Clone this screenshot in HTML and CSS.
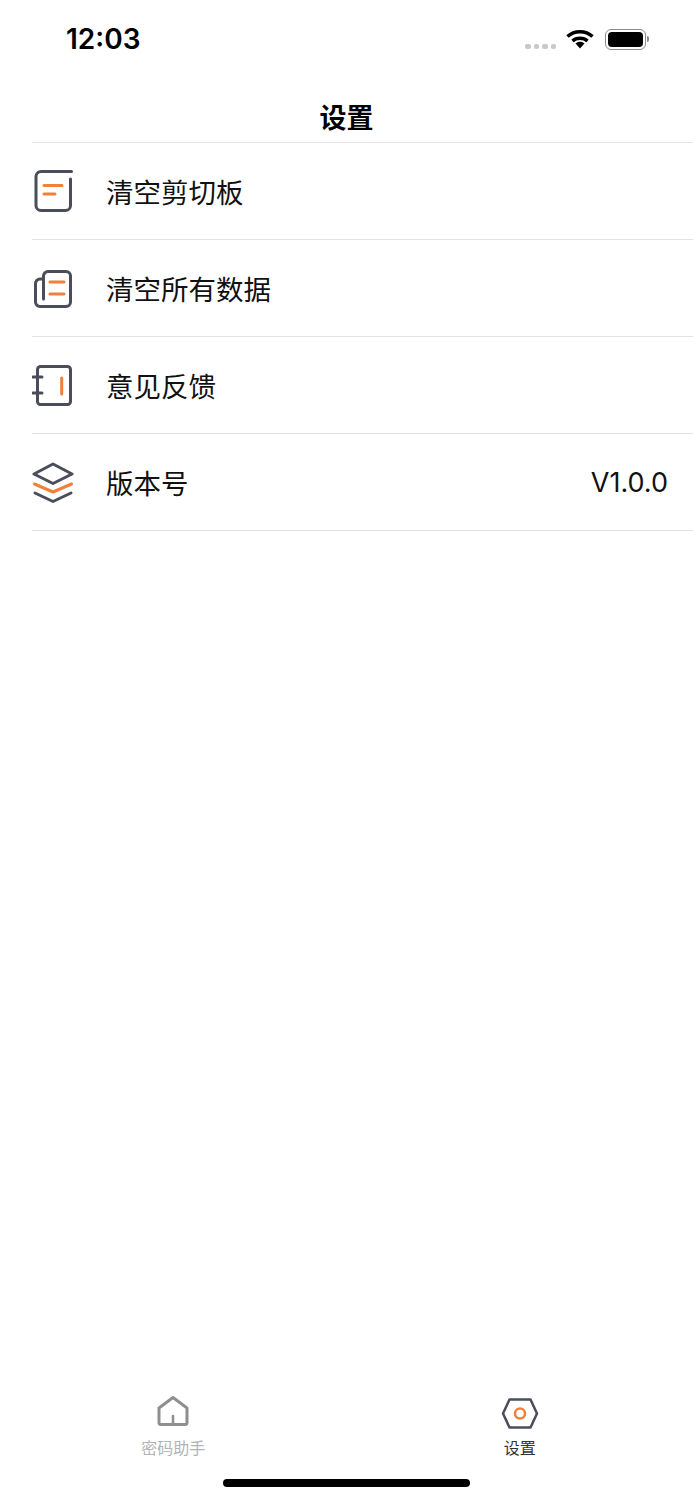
FILE: index.html
```html
<!DOCTYPE html>
<html lang="zh-CN">
<head>
  <meta charset="UTF-8">
  <meta name="viewport" content="width=device-width, initial-scale=1.0">
  <title>设置</title>
  <link rel="stylesheet" href="styles.css">
</head>
<body>
  <div class="page">
    <div class="status-bar">
      <span class="time">12:03</span>
      <div class="status-icons">
        <div class="signal"><i></i><i></i><i></i><i></i></div>
        <svg class="wifi" width="28" height="20" viewBox="0 0 28 20">
          <path d="M1.5 7.5C8.5 1 19.5 1 26.5 7.5" class="wifi-arc"/>
          <path d="M6.5 12C10.5 8.3 17.500 8.300 21.500 12" class="wifi-arc"/>
          <path d="M9.500 14.500L14 19.500L18.500 14.500C16 12.300 12 12.300 9.500 14.500Z"/>
        </svg>
        <div class="battery"><div class="battery-fill"></div></div>
        <div class="battery-tip"></div>
      </div>
    </div>
    <div class="nav-title">设置</div>
    <div class="menu">
      <div class="menu-row">
        <svg class="menu-icon" viewBox="0 0 44 44">
          <path class="dark" d="M39.500 2.500H9a5 5 0 0 0-5 5V36.500a5 5 0 0 0 5 5H33.500a5 5 0 0 0 5-5V10"/>
          <path class="accent" d="M12 16.500H30M12 25H23"/>
        </svg>
        <span class="menu-label">清空剪切板</span>
      </div>
      <div class="menu-row">
        <svg class="menu-icon" viewBox="0 0 44 44">
          <path class="dark" d="M11.500 33V10a4.500 4.500 0 0 1 4.500-4.500H34a4.500 4.500 0 0 1 4.500 4.500V36a4.500 4.500 0 0 1-4.500 4.500H8a4.500 4.500 0 0 1-4.500-4.500V17.500a4.500 4.500 0 0 1 4.500-4.500H11.500"/>
          <path class="accent" d="M18 16H32M18 28H32"/>
        </svg>
        <span class="menu-label">清空所有数据</span>
      </div>
      <div class="menu-row">
        <svg class="menu-icon" viewBox="0 0 44 44">
          <rect class="dark" x="5.500" y="3.500" width="33" height="38" rx="3"/>
          <path class="dark" d="M1 14H10M1 30H10"/>
          <path class="accent" d="M29.700 15V31"/>
        </svg>
        <span class="menu-label">意见反馈</span>
      </div>
      <div class="menu-row">
        <svg class="menu-icon" viewBox="0 0 44 44">
          <path class="dark" d="M21 4L40 14L21 23.500L2 14Z"/>
          <path class="accent" d="M2.500 24L21 32L39.500 24"/>
          <path class="dark" d="M3 33L21 41.500L39 33"/>
        </svg>
        <span class="menu-label">版本号</span>
        <span class="menu-value">V1.0.0</span>
      </div>
    </div>
    <div class="tab-bar">
      <div class="tab tab-off">
        <svg class="tab-icon" viewBox="0 0 44 44">
          <path class="grey" d="M22 5.500L36 16V30.500a2 2 0 0 1-2 2H10a2 2 0 0 1-2-2V16Z"/>
          <path class="grey thin" d="M22 24V31"/>
        </svg>
        <span>密码助手</span>
      </div>
      <div class="tab">
        <svg class="tab-icon" viewBox="0 0 44 44">
          <path class="dark thin" d="M11.500 7.500H32.500L39 21.500L32.500 35.500H11.500L5 21.500Z"/>
          <circle class="accent thin" cx="22" cy="21.500" r="5"/>
        </svg>
        <span>设置</span>
      </div>
    </div>
    <div class="home-bar"><div class="home-pill"></div></div>
  </div>
</body>
</html>
```

FILE: styles.css
```css
body {
  margin: 0;
  background: #fff;
  font-family: "Noto Sans CJK SC", "Noto Sans", sans-serif;
  color: #111;
}
.page {
  width: 693px;
  height: 1500px;
  display: flex;
  flex-direction: column;
  overflow: hidden;
}
.status-bar {
  height: 80px;
  display: flex;
  justify-content: space-between;
  align-items: flex-start;
  padding: 0 44px 0 66px;
  box-sizing: border-box;
}
.time {
  margin-top: 22px;
  font-family: Inter, "Liberation Sans", sans-serif;
  font-size: 28px;
  font-weight: 600;
  line-height: 34px;
  color: #000;
}
.status-icons {
  display: flex;
  align-items: flex-start;
  margin-top: 29px;
}
.signal {
  display: flex;
  gap: 3px;
  margin: 15px 10px 0 0;
}
.signal i {
  width: 5.500px;
  height: 5px;
  border-radius: 2px;
  background: #c9c9c9;
}
.wifi {
  margin-right: 11px;
}
.wifi path {
  fill: #000;
}
.wifi .wifi-arc {
  fill: none;
  stroke: #000;
  stroke-width: 3.500;
}
.battery {
  width: 41px;
  height: 21px;
  box-sizing: border-box;
  border: 1.500px solid #8c8c8c;
  border-radius: 6px;
  padding: 2px;
}
.battery-fill {
  height: 100%;
  background: #000;
  border-radius: 4px;
}
.battery-tip {
  width: 2px;
  height: 6px;
  margin: 7px 0 0 1px;
  background: #8c8c8c;
  border-radius: 0 2px 2px 0;
}
.nav-title {
  height: 62px;
  margin-left: 32px;
  padding-right: 32px;
  border-bottom: 1px solid #e6e6e6;
  text-align: center;
  font-size: 27px;
  font-weight: 700;
  line-height: 74px;
  color: #000;
}
.menu {
  margin-left: 32px;
}
.menu-row {
  height: 96px;
  display: flex;
  align-items: center;
  border-bottom: 1px solid #e2e2e2;
  padding-right: 25px;
}
.menu-icon {
  width: 44px;
  height: 44px;
  flex: none;
  margin-right: 30px;
}
.menu-label {
  font-size: 27.500px;
  color: #111;
}
.menu-value {
  margin-left: auto;
  font-family: Inter, "Liberation Sans", sans-serif;
  font-size: 27px;
  color: #111;
}
.dark, .accent, .grey {
  fill: none;
  stroke-width: 3;
  stroke-linecap: round;
  stroke-linejoin: round;
}
.dark {
  stroke: #4b4d5b;
}
.accent {
  stroke: #f0803a;
}
.grey {
  stroke: #8f8f8f;
}
.thin {
  stroke-width: 2.500;
}
.tab-bar {
  margin-top: auto;
  display: flex;
  padding-bottom: 8px;
}
.tab {
  width: 346.500px;
  display: flex;
  flex-direction: column;
  align-items: center;
  font-size: 16px;
  line-height: 22px;
  color: #333;
}
.tab-off {
  color: #b3b3b3;
}
.tab-icon {
  width: 44px;
  height: 44px;
}
.home-bar {
  height: 34px;
  display: flex;
  justify-content: center;
}
.home-pill {
  width: 247px;
  height: 8px;
  margin-top: 13px;
  border-radius: 4px;
  background: #000;
}
```
